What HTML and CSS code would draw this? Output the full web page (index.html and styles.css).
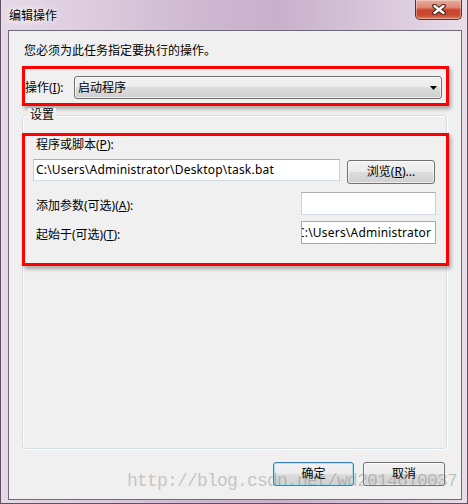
FILE: index.html
```html
<!DOCTYPE html>
<html lang="zh-CN">
<head>
<meta charset="utf-8">
<title>编辑操作</title>
<link rel="stylesheet" href="styles.css">
</head>
<body>
<div class="window">
  <div class="titlebar">
    <span class="title">编辑操作</span>
    <div class="close">
      <svg width="14" height="11" viewBox="0 0 14 11">
        <path d="M2.5 2 L11.5 9 M11.5 2 L2.5 9" stroke="#4a1b15" stroke-width="4.6" stroke-linecap="round" fill="none"/>
        <path d="M2.5 2 L11.5 9 M11.5 2 L2.5 9" stroke="#ffffff" stroke-width="2.4" stroke-linecap="round" fill="none"/>
      </svg>
    </div>
  </div>
  <div class="client">
    <p class="intro">您必须为此任务指定要执行的操作。</p>
    <div class="mark mark-action">
      <span class="action-label">操作(<u>I</u>):</span>
      <div class="combo">
        <span>启动程序</span>
        <svg class="arrow" width="7" height="4" viewBox="0 0 7 4"><path d="M0 0 H7 L3.5 4 Z" fill="#000"/></svg>
      </div>
    </div>
    <div class="group">
      <div class="group-title">设置</div>
      <div class="mark mark-settings">
        <div class="prog-label">程序或脚本(<u>P</u>):</div>
        <div class="row-prog">
          <div class="field field-prog">C:\Users\Administrator\Desktop\task.bat</div>
          <div class="btn btn-browse">浏览(<u>R</u>)...</div>
        </div>
        <div class="row-field row-args">
          <span class="field-label">添加参数(可选)(<u>A</u>):</span>
          <div class="field field-short"></div>
        </div>
        <div class="row-field row-start">
          <span class="field-label">起始于(可选)(<u>T</u>):</span>
          <div class="field field-short field-focus"><span class="scrolled">C:\Users\Administrator</span></div>
        </div>
      </div>
    </div>
    <div class="actions">
      <div class="btn btn-ok">确定</div>
      <div class="btn btn-cancel">取消</div>
    </div>
    <div class="watermark">http://blog.csdn.net/wd2014610037</div>
  </div>
</div>
</body>
</html>
```
FILE: styles.css
```css
* { box-sizing: border-box; }
html, body { margin: 0; padding: 0; }
body {
  width: 468px;
  height: 504px;
  overflow: hidden;
  font: 12px/16px "Noto Sans", "Noto Sans CJK SC", sans-serif;
  color: #000;
  background: #6e5f70;
}
u { text-decoration: underline; text-underline-offset: 1px; }

.window {
  width: 468px;
  height: 504px;
  display: flex;
  flex-direction: column;
  padding: 0 5px 3px 7px;
  border: 1px solid #5f5262;
  border-top: none;
  background: linear-gradient(90deg, #e6d9e7 0%, #dccbdd 20%, #cdb6cf 45%, #c9b1cc 60%, #d9c8db 82%, #e8dde9 100%);
}

.titlebar {
  height: 30px;
  flex: none;
  display: flex;
  align-items: flex-start;
}
.title {
  margin: 8px 0 0 1px;
  line-height: 16px;
  text-shadow: 0 0 6px #fff, 0 0 10px rgba(255,255,255,.8);
}
.close {
  margin-left: auto;
  width: 47px;
  height: 20px;
  border: 1px solid #6b2b25;
  border-top: none;
  border-radius: 0 0 5px 5px;
  background: linear-gradient(#eaa99b 0%, #dc8672 40%, #c8452f 52%, #c94a32 80%, #dc7e5f 100%);
  box-shadow: inset 0 0 0 1px rgba(255,255,255,.35);
  display: flex;
  align-items: center;
  justify-content: center;
}

.client {
  flex: 1;
  position: relative;
  display: flex;
  flex-direction: column;
  background: #f0f0f0;
  border: 1px solid #6f6a7a;
}

.intro { margin: 12px 0 0 15px; }

.mark {
  border: 3px solid #ff0000;
  box-shadow: 2px 3px 4px rgba(0,0,0,.3);
}
.mark-action {
  margin: 7px 0 0 13px;
  width: 427px;
  height: 40px;
  padding: 3px 4px 0 0;
  display: flex;
  align-items: center;
}
.action-label { width: 49px; }
.combo {
  flex: 1;
  height: 23px;
  display: flex;
  align-items: center;
  justify-content: space-between;
  padding: 0 4px 0 3px;
  border: 1px solid #707070;
  border-radius: 3px;
  background: linear-gradient(#f2f2f2 0%, #ebebeb 50%, #dddddd 50%, #cfcfcf 100%);
  box-shadow: inset 0 0 0 1px rgba(255,255,255,.6);
}

.group {
  margin: 9px 0 0 13px;
  width: 425px;
  height: 334px;
  border: 1px solid #d5dfe5;
  border-radius: 3px;
  box-shadow: inset 1px 1px 0 #fff, 1px 1px 0 #fff;
}
.group-title {
  margin: -8px 0 0 5px;
  padding: 0 2px;
  width: fit-content;
  line-height: 14px;
  background: #f0f0f0;
}
.mark-settings {
  margin: 11px 0 0 -1px;
  width: 427px;
  height: 133px;
  padding-top: 1px;
}
.prog-label { padding-left: 11px; }
.row-prog {
  display: flex;
  align-items: flex-start;
  gap: 7px;
  margin-top: 6px;
  padding-left: 8px;
}
.field {
  height: 22px;
  background: #fff;
  border: 1px solid #abadb3;
  border-color: #abadb3 #c9d0da #d5dbe3 #c9d0da;
  line-height: 20px;
  padding-left: 2px;
  letter-spacing: 0.2px;
  white-space: nowrap;
  overflow: hidden;
}
.field-prog { width: 307px; }
.btn {
  display: flex;
  align-items: center;
  justify-content: center;
  height: 24px;
  border: 1px solid #707070;
  border-radius: 3px;
  background: linear-gradient(#f2f2f2 0%, #ebebeb 50%, #dddddd 50%, #cfcfcf 100%);
  box-shadow: inset 0 0 0 1px rgba(255,255,255,.6);
}
.btn-browse { width: 88px; margin-top: 1px; }

.row-field {
  display: flex;
  align-items: center;
  justify-content: space-between;
  padding: 0 10px 0 11px;
}
.row-args { margin-top: 8px; }
.row-start { margin-top: 6px; }
.field-label { margin-top: 4px; }
.field-short { width: 135px; height: 23px; line-height: 21px; }
.field-focus { border: 1px solid #7eb4ea; padding-left: 0; }
.scrolled { display: inline-block; margin-left: -5px; }

.actions {
  display: flex;
  justify-content: flex-end;
  gap: 9px;
  margin-top: 13px;
  padding-right: 16px;
}
.btn-ok {
  width: 81px;
  border-color: #3c7fb1;
  box-shadow: inset 0 0 0 1px #a8e2f8;
}
.btn-cancel { width: 82px; }

.watermark {
  position: absolute;
  left: 118px;
  top: 441px;
  font: 18px/18px "Liberation Mono", monospace;
  letter-spacing: -0.8px;
  color: rgba(110,110,110,.35);
  white-space: nowrap;
  pointer-events: none;
}
```
